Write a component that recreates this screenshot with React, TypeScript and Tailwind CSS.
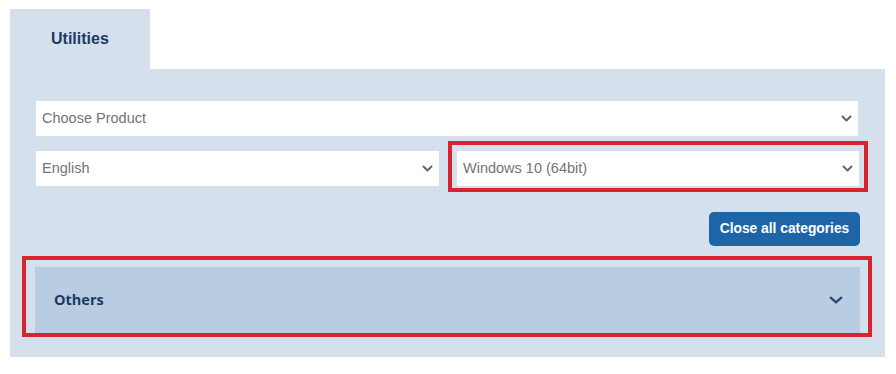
import React from "react";

function Chevron({ className, w = 11, h = 7, sw = 2 }: { className?: string; w?: number; h?: number; sw?: number }) {
  return (
    <svg width={w} height={h} viewBox={`0 0 ${w} ${h}`} className={className} fill="none">
      <polyline points={`${sw / 2 + 0.5},${sw / 2 + 0.5} ${w / 2},${h - sw / 2 - 0.5} ${w - sw / 2 - 0.5},${sw / 2 + 0.5}`} stroke="currentColor" strokeWidth={sw} strokeLinecap="round" strokeLinejoin="round" />
    </svg>
  );
}

function Select({ label, className = "" }: { label: string; className?: string }) {
  return (
    <div className={`h-[35px] bg-white flex items-center justify-between pl-[6px] pr-[6px] ${className}`}>
      <span className="text-[14.5px] text-[#747474]" style={{ fontFamily: '"Liberation Sans", Arial, sans-serif' }}>{label}</span>
      <Chevron className="text-[#666666]" />
    </div>
  );
}

export default function App() {
  return (
    <div className="relative w-[896px] h-[374px] bg-white pl-[10px] pt-[9px]" style={{ fontFamily: '"Liberation Sans", Arial, sans-serif' }}>
      <div className="w-[140px] h-[60px] bg-[#d4e0ec] flex items-center pl-[41px]">
        <span className="text-[16px] font-bold text-[#1b3a66]">Utilities</span>
      </div>
      <div className="w-[875px] h-[288px] bg-[#d4e0ec] px-[26px] pt-[32px] flex flex-col">
        <Select label="Choose Product" className="w-[822px]" />
        <div className="flex gap-[18px] mt-[15px]">
          <Select label="English" className="w-[403px]" />
          <Select label="Windows 10 (64bit)" className="w-[402px]" />
        </div>
        <div className="flex justify-end mt-[26px] -mr-[1px]">
          <button className="h-[34px] w-[151px] rounded-[5px] bg-[#1e65a7] text-white text-[13.8px] font-bold flex items-center justify-center">
            Close all categories
          </button>
        </div>
        <div className="mt-[21px] -ml-[1px] w-[825px] h-[66px] bg-[#b8cde1] flex items-center justify-between pl-[19px] pr-[17px]">
          <span className="text-[14.5px] font-bold text-[#1b3a66]" style={{ fontFamily: '"Open Sans", "Noto Sans", sans-serif' }}>Others</span>
          <Chevron className="text-[#2a4a75]" w={14} h={8} sw={2.4} />
        </div>
      </div>
      <div className="absolute left-[448px] top-[141px] w-[420px] h-[51px] border-[4px] border-[#d9232f] pointer-events-none" />
      <div className="absolute left-[22px] top-[256px] w-[850px] h-[81px] border-[4px] border-[#d9232f] pointer-events-none" />
    </div>
  );
}
